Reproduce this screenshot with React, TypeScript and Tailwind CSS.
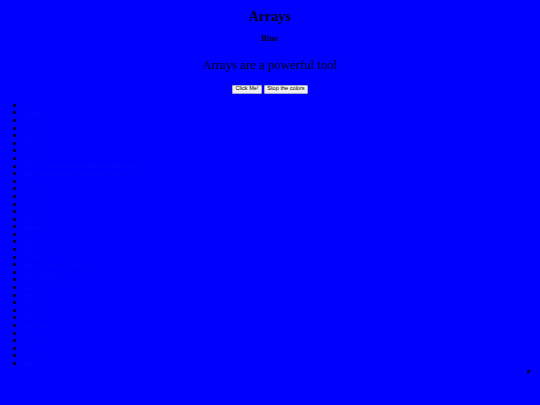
const COLORS = [
  "Red",
  "Orange",
  "Yellow",
  "Green",
  "Purple",
  "Pink",
  "Brown",
  "Gray",
  "Light Sea Green and Medium Aquamarine",
  "Dark Slate Blue and Cornflower Blue Tint",
  "Teal",
  "Olive Drab",
  "Crimson",
  "Lavender",
  "Turquoise",
  "Indigo",
  "Salmon",
  "Gold",
  "Medium Violet Red",
  "Dark Olive Green",
  "Sky Blue",
  "Light Goldenrod Yellow",
  "Dark Turquoise",
  "Blanched Almond",
  "Sea Green",
  "Tomato",
  "Orchid",
  "Khaki",
  "Lime",
  "Chocolate",
  "Coral",
  "Peach Puff",
  "Navy",
  "Beige",
  "Plum",
];

export default function App() {
  return (
    <div className="w-[540px] h-[405px] overflow-hidden bg-[#0000ff] text-[#000024] font-['Liberation_Serif',serif]">
      <h1 className="text-center font-bold text-[14px] leading-[15.5px] pt-[9px]">Arrays</h1>
      <h3 className="text-center font-bold text-[9px] leading-[9px] mt-[9px]">Blue</h3>
      <p className="text-center text-[12.8px] leading-[15px] mt-[15px]">Arrays are a powerful tool</p>
      <div className="flex justify-center gap-[2px] mt-[12px] font-['Liberation_Sans',sans-serif] text-[5.6px] text-black">
        <button className="h-[9px] w-[30px] bg-[#f0f0f0] border border-[#a8a8c8] rounded-[1px] leading-none">
          Click Me!
        </button>
        <button className="h-[9px] w-[44px] bg-[#f0f0f0] border border-[#a8a8c8] rounded-[1px] leading-none">
          Stop the colors
        </button>
      </div>
      <ul className="mt-[8px] pl-[13px] text-[6.7px] leading-[7.6px]">
        {COLORS.map((c) => (
          <li key={c} className="flex items-center gap-[4px] text-[#0707f8]">
            <span className="w-[3px] h-[3px] shrink-0 bg-[#00003c]" />
            {c}
          </li>
        ))}
      </ul>
      <div className="flex justify-end pr-[10px] h-[7.6px] items-center">
        <span className="w-[3px] h-[3px] bg-[#00003c]" />
      </div>
    </div>
  );
}
